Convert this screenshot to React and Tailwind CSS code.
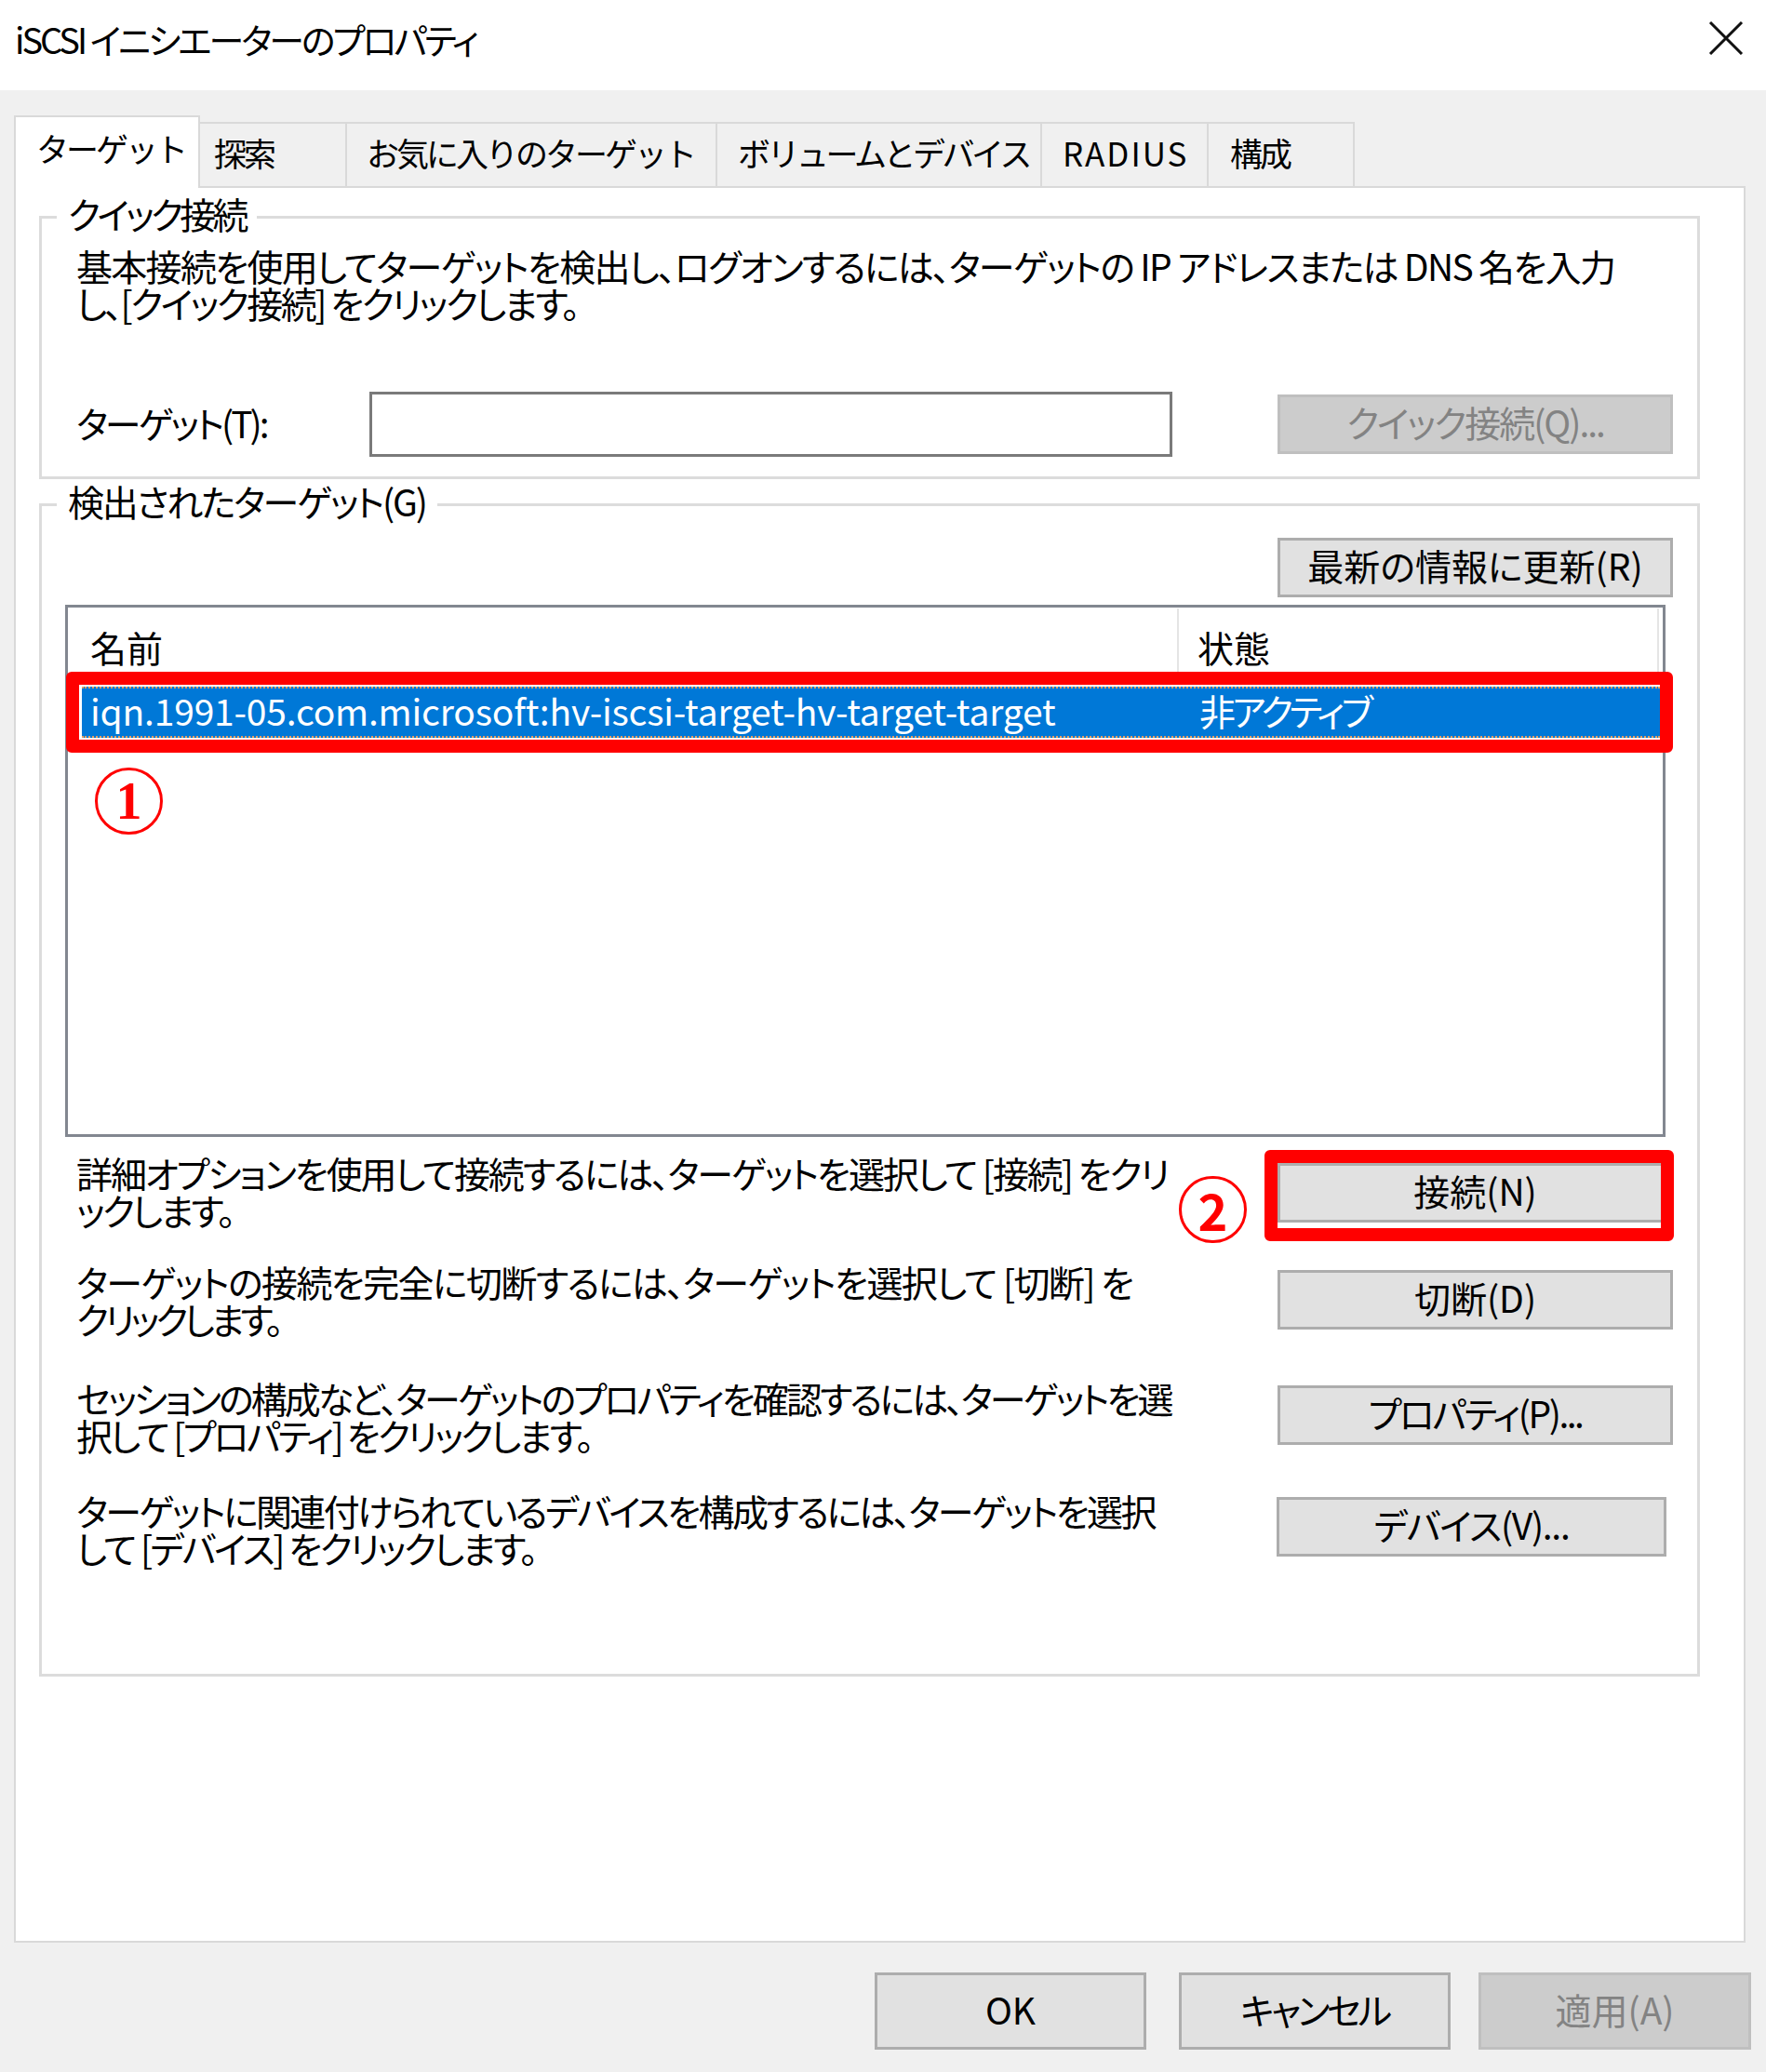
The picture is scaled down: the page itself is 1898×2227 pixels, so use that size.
const jp = "font-['Noto_Sans_CJK_JP',sans-serif] [font-feature-settings:'palt']";

const Tab = ({ label, width, pl, active, tr = "tracking-[-3px]" }) =>
  active ? (
    <div
      className={`relative z-10 -mb-[2px] h-[78px] bg-white border-2 border-b-0 border-[#d9d9d9] pt-[13px] whitespace-nowrap ${tr} ${width} ${pl}`}
    >
      {label}
    </div>
  ) : (
    <div
      className={`h-[69px] bg-[#f0f0f0] border-2 border-l-0 border-b-0 border-[#d9d9d9] pt-[11px] whitespace-nowrap ${tr} ${width} ${pl}`}
    >
      {label}
    </div>
  );

const Button = ({ children, className = "", disabled, tr = "tracking-[0px]" }) => (
  <div
    className={`flex items-center justify-center h-[64px] pb-[6px] border-[3px] whitespace-nowrap ${tr} ${
      disabled
        ? "bg-[#cccccc] border-[#bfbfbf] text-[#838383]"
        : "bg-[#e1e1e1] border-[#adadad] text-black"
    } ${className}`}
  >
    {children}
  </div>
);

const Circle = ({ children, className = "" }) => (
  <div
    className={`w-[73px] h-[72px] rounded-full border-[3px] border-[#ff0000] flex items-center justify-center text-[#ff0000] font-bold leading-none tracking-[0px] ${className}`}
  >
    {children}
  </div>
);

// each line: [text, tracking class]
const Para = ({ lines }) => (
  <div className="whitespace-nowrap">
    {lines.map(([t, tr]) => (
      <div key={t} className={tr}>
        {t}
      </div>
    ))}
  </div>
);

const App = () => {
  return (
    <div
      className={`w-[1898px] h-[2227px] overflow-hidden bg-[#f0f0f0] text-black text-[39px] leading-[40px] ${jp}`}
    >
      {/* title bar */}
      <div className="h-[97px] bg-white flex items-center justify-between pl-[16px] pr-[24px]">
        <span className="text-[38px] tracking-[-3px] pb-[14px]">iSCSI イニシエーターのプロパティ</span>
        <svg width="38" height="36" viewBox="0 0 38 36" className="mb-[15px]">
          <path d="M2 1 L36 35 M36 1 L2 35" stroke="#111" strokeWidth="3" fill="none" />
        </svg>
      </div>

      <div className="pl-[15px] pr-[16px] pt-[27px]">
        {/* tabs */}
        <div className="flex items-end h-[76px] text-[35px] [font-feature-settings:normal]">
          <Tab label="ターゲット" width="w-[200px]" pl="pl-[22px]" active />
          <Tab label="探索" width="w-[158px]" pl="pl-[15px]" />
          <Tab label="お気に入りのターゲット" width="w-[398px]" pl="pl-[21px]" />
          <Tab label="ボリュームとデバイス" width="w-[349px]" pl="pl-[22px]" tr="tracking-[-3.5px]" />
          <Tab label="RADIUS" width="w-[179px]" pl="pl-[22px]" tr="tracking-[2px]" />
          <Tab label="構成" width="w-[157px]" pl="pl-[23px]" />
        </div>

        {/* panel */}
        <div className="w-[1861px] h-[1888px] bg-white border-2 border-[#d9d9d9] pl-[25px] pr-[47px] pt-[7px]">
          <fieldset className="border-[3px] border-[#dcdcdc]">
            <legend className="ml-[16px] px-[12px] pb-[8px] tracking-[-3.7px]">クイック接続</legend>
            <div className="pl-[37px] pt-[8px] pb-[21px]">
              <Para
                lines={[
                  [
                    "基本接続を使用してターゲットを検出し、ログオンするには、ターゲットの IP アドレスまたは DNS 名を入力",
                    "tracking-[-1.7px]",
                  ],
                  ["し、[クイック接続] をクリックします。", "tracking-[-2.5px]"],
                ]}
              />
              <div className="flex items-center mt-[76px]">
                <div className="w-[315px] pb-[5px] whitespace-nowrap tracking-[-3px]">ターゲット(T):</div>
                <div className="w-[863px] h-[70px] border-[3px] border-[#7a7a7a] bg-white" />
                <Button disabled tr="tracking-[-2px]" className="ml-[113px] w-[425px]">
                  クイック接続(Q)...
                </Button>
              </div>
            </div>
          </fieldset>

          <fieldset className="mt-[3px] border-[3px] border-[#dcdcdc]">
            <legend className="ml-[16px] px-[12px] pb-[8px] tracking-[-2.2px]">検出されたターゲット(G)</legend>
            <div className="pl-[25px] pr-[26px] pt-[12px] pb-[116px]">
              <div className="flex justify-end">
                <Button className="w-[425px]">最新の情報に更新(R)</Button>
              </div>

              {/* list view */}
              <div className="mt-[8px] mr-[8px] h-[572px] border-[3px] border-[#828790] bg-white">
                <div className="flex h-[82px] pt-[1px]">
                  <div className="w-[1194px] flex items-center pl-[24px] border-r-2 border-[#e5e5e5]">
                    名前
                  </div>
                  <div className="w-[516px] flex items-center pl-[20px] border-r-2 border-[#e5e5e5]">
                    状態
                  </div>
                </div>
                <div className="relative mt-[3px] ml-[15px] mr-[3px] h-[55px] pb-[5px] bg-[#0078d7] text-white flex items-center border-y-2 border-dotted border-[#e9a060] whitespace-nowrap">
                  <div className="w-[1201px] pl-[9px] tracking-[-0.2px]">
                    iqn.1991-05.com.microsoft:hv-iscsi-target-hv-target-target
                  </div>
                  <div className="tracking-[-3.8px]">非アクティブ</div>
                  <div className="absolute -left-[17px] -right-[14px] -top-[18px] -bottom-[18px] border-[14px] border-[#ff0000] rounded-[6px]" />
                </div>
                <Circle className="ml-[29px] mt-[32px] text-[56px] font-['Liberation_Serif',serif]">
                  1
                </Circle>
              </div>

              {/* action rows */}
              <div className="relative flex justify-between pl-[12px] mt-[18px]">
                <Para
                  lines={[
                    [
                      "詳細オプションを使用して接続するには、ターゲットを選択して [接続] をクリ",
                      "tracking-[-2.1px]",
                    ],
                    ["ックします。", "tracking-[-2.8px]"],
                  ]}
                />
                <div className="relative mt-[10px] w-[425px]">
                  <Button>接続(N)</Button>
                  <div className="absolute -left-[14px] -right-[1px] -top-[14px] -bottom-[14px] border-[14px] border-[#ff0000] rounded-[6px]" />
                </div>
                <Circle className="absolute left-[1197px] top-[24px] text-[54px]">2</Circle>
              </div>

              <div className="flex justify-between pl-[12px] mt-[37px]">
                <Para
                  lines={[
                    [
                      "ターゲットの接続を完全に切断するには、ターゲットを選択して [切断] を",
                      "tracking-[-1.6px]",
                    ],
                    ["クリックします。", "tracking-[-4.2px]"],
                  ]}
                />
                <Button className="mt-[8px] w-[425px]">切断(D)</Button>
              </div>

              <div className="flex justify-between pl-[12px] mt-[45px]">
                <Para
                  lines={[
                    [
                      "セッションの構成など、ターゲットのプロパティを確認するには、ターゲットを選",
                      "tracking-[-2.9px]",
                    ],
                    ["択して [プロパティ] をクリックします。", "tracking-[-2.8px]"],
                  ]}
                />
                <Button tr="tracking-[-2.5px]" className="mt-[7px] w-[425px]">
                  プロパティ(P)...
                </Button>
              </div>

              <div className="flex justify-between pl-[12px] mt-[41px]">
                <Para
                  lines={[
                    [
                      "ターゲットに関連付けられているデバイスを構成するには、ターゲットを選択",
                      "tracking-[-2.6px]",
                    ],
                    ["して [デバイス] をクリックします。", "tracking-[-2.5px]"],
                  ]}
                />
                <Button tr="tracking-[-1.3px]" className="mt-[6px] mr-[7px] w-[419px]">
                  デバイス(V)...
                </Button>
              </div>
            </div>
          </fieldset>
        </div>

        {/* dialog buttons */}
        <div className="flex justify-end mt-[32px]">
          <Button className="w-[292px] h-[83px]">OK</Button>
          <Button tr="tracking-[-3.4px]" className="ml-[35px] w-[292px] h-[83px]">
            キャンセル
          </Button>
          <Button disabled className="ml-[30px] w-[293px] h-[83px]">
            適用(A)
          </Button>
        </div>
      </div>
    </div>
  );
};

export default App;
